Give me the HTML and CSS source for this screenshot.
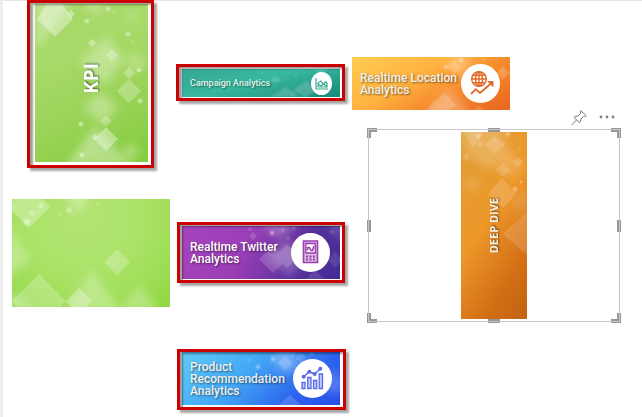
FILE: index.html
```html
<!DOCTYPE html>
<html lang="en">
<head>
<meta charset="utf-8">
<meta name="viewport" content="width=device-width">
<title>Analytics</title>
<link rel="stylesheet" href="styles.css">
</head>
<body>
<svg class="defs" aria-hidden="true">
  <defs>
    <filter id="soft" x="-40%" y="-40%" width="180%" height="180%"><feGaussianBlur stdDeviation="4"/></filter>
    <filter id="glow" x="-60%" y="-60%" width="220%" height="220%"><feGaussianBlur stdDeviation="0.9"/></filter>
  </defs>
</svg>
<main class="canvas">
  <section class="column column-overview">
    <a class="frame frame-kpi" href="#kpi">
      <span class="tile tile-kpi">
        <svg class="art" viewBox="0 0 113 158" preserveAspectRatio="xMidYMid slice" aria-hidden="true">
          <g fill="#fff" filter="url(#soft)">
            <path opacity=".3" d="M0-4H40L0 48Z"/>
            <path opacity=".3" d="M72 32L90 55 70 82 44 58Z"/>
            <path opacity=".32" d="M66 88L83 104 66 120 49 104Z"/>
            <path opacity=".35" d="M60 122L98 162H30Z"/>
            <path opacity=".25" d="M100 47L112 59 101 69 90 58Z"/>
            <path opacity=".3" d="M97 138L105 148 96 157 87 148Z"/>
            <path opacity=".25" d="M43-6H74L60 13Z"/>
            <path opacity=".25" d="M96 5L102 11 96 17 90 11Z"/>
          </g>
          <g fill="#fff">
            <path opacity=".35" d="M14-4H24L38 15 20 33 2 15Z"/>
            <path opacity=".35" d="M36 6L40 10 36 14 32 10ZM57 35L61 39 57 43 53 39Z"/>
            <path opacity=".28" d="M77 45L83 51 77 57 71 51ZM94 63L100 69 94 75 88 69Z"/>
            <path opacity=".25" d="M94 75L106 87 94 99 82 87ZM71 111L77 117 71 123 65 117Z"/>
            <path opacity=".36" d="M71 123L83 135 71 147 59 135Z"/>
            <path opacity=".4" d="M104 63L107 66 104 69 101 66ZM105 94L108 97 105 100 102 97ZM46 117L49 120 46 123 43 120ZM47 148L50 151 47 154 44 151ZM60 130L63 133 60 136 57 133Z"/>
          </g>
          <g fill="#fff" opacity=".65" filter="url(#glow)"><circle cx="73" cy="5" r="2"/><circle cx="52" cy="17" r="2"/><circle cx="93" cy="30" r="2"/><circle cx="79" cy="8" r="1"/><circle cx="98" cy="38" r="1"/></g>
        </svg>
        <span class="label label-vertical label-kpi">KPI</span>
      </span>
    </a>
    <div class="tile tile-green">
      <svg class="art" viewBox="0 0 158 108" preserveAspectRatio="xMidYMid slice" aria-hidden="true">
        <g fill="#fff" filter="url(#soft)">
          <path opacity=".28" d="M-6 22L18 60-6 82Z"/>
          <path opacity=".3" d="M51-8H82L66 14Z"/>
          <path opacity=".28" d="M80 72L110 112H52Z"/>
          <path opacity=".28" d="M127 86L147 112H108Z"/>
          <path opacity=".28" d="M0 92L20 110H-8Z"/>
        </g>
        <g fill="#fff">
          <path opacity=".26" d="M2 0H30L38 8 17 29 0 12V2Z"/>
          <path opacity=".24" d="M105 50L118 63 105 76 92 63Z"/>
          <path opacity=".22" d="M27 75L54 102 48 108H6L0 102Z"/>
          <path opacity=".28" d="M67 89L80 102 74 108H60L54 102Z"/>
        </g>
        <g fill="#fff" opacity=".5" filter="url(#glow)"><circle cx="15" cy="23" r="3"/><circle cx="57" cy="11" r="2.500"/><circle cx="29" cy="7" r="2"/><circle cx="20" cy="14" r="2"/><circle cx="27" cy="13" r="1"/><circle cx="48" cy="15" r="1"/><circle cx="62" cy="15" r="1"/><circle cx="86" cy="5" r="1"/><circle cx="2" cy="7" r="1"/></g>
      </svg>
    </div>
  </section>

  <section class="column column-reports">
    <a class="frame" href="#campaign">
      <span class="tile tile-banner tile-campaign">
        <svg class="art" viewBox="0 0 158 28" preserveAspectRatio="xMidYMid slice" aria-hidden="true">
          <g fill="#fff" filter="url(#glow)"><path opacity=".18" d="M104 18L118 28H88ZM124 12L136 21 123 29 111 21ZM93 8L98 11 93 14 88 11ZM132 0H146L139 5Z"/><g opacity=".3"><circle cx="80" cy="4" r="1"/><circle cx="97" cy="11" r="1"/><circle cx="114" cy="7" r="1"/><circle cx="111" cy="25" r="1"/></g></g>
        </svg>
        <span class="label label-small">Campaign Analytics</span>
        <svg class="badge badge-small" viewBox="0 0 21 23" aria-hidden="true">
          <ellipse cx="10.500" cy="11.500" rx="10.500" ry="11.500" fill="#fff"/>
          <g fill="none" stroke="#38a794" stroke-width="1.200"><path d="M5 6V17H17M7 15V11L10 9 12 12 15 10 16 12V15Z"/><path d="M7 12L10 14 13 12 16 15"/></g>
        </svg>
      </span>
    </a>
    <a class="frame frame-twitter" href="#twitter">
      <span class="tile tile-banner tile-twitter">
        <svg class="art" viewBox="0 0 158 53" preserveAspectRatio="xMidYMid slice" aria-hidden="true">
          <g fill="#fff" filter="url(#soft)"><path opacity=".22" d="M103 14L128 30 108 50 84 31Z"/><path opacity=".25" d="M76-5H118L98 13Z"/><path opacity=".2" d="M142-8H160V16Z"/></g>
          <g fill="#fff"><path opacity=".16" d="M91 20L106 33 91 47 77 33ZM105 18L118 30 105 42 94 30ZM71 6L75 10 71 14 67 10Z"/><path opacity=".1" d="M133 44L142 53H124ZM153 26L160 34 153 42 146 34Z"/></g>
          <g fill="#fff" opacity=".6" filter="url(#glow)"><circle cx="68" cy="3" r="1"/><circle cx="90" cy="7" r="2"/><circle cx="101" cy="4" r="1"/><circle cx="112" cy="2" r="1"/><circle cx="106" cy="12" r="1"/><circle cx="150" cy="6" r="1"/></g>
        </svg>
        <span class="label">Realtime Twitter<br>Analytics</span>
        <svg class="badge" viewBox="0 0 39 39" aria-hidden="true">
          <circle cx="19.500" cy="19.500" r="19.500" fill="#fff"/>
          <g fill="none" stroke="#9b3fb0"><path fill="#dcb8e4" stroke-width="1.600" d="M12.500 8H26.500V29.500H12.500Z"/><path fill="#fff" stroke-width="1.300" d="M14.800 10.500H24.300V20H14.800Z"/><path stroke-width="1.600" d="M16.500 17.500V14.500H18.500L20 17.500H21.500L23 13"/><path stroke-width="1.800" stroke-dasharray="2 1.500" d="M15 23.500H24M15 26.500H24"/></g>
        </svg>
      </span>
    </a>
    <a class="frame frame-product" href="#product">
      <span class="tile tile-banner tile-product">
        <svg class="art" viewBox="0 0 158 53" preserveAspectRatio="xMidYMid slice" aria-hidden="true">
          <g fill="#fff" filter="url(#soft)"><path opacity=".3" d="M105-4L120 14 103 22 89 7Z"/><path opacity=".2" d="M151 17L165 32 151 45 139 31Z"/></g>
          <g fill="#fff"><path opacity=".15" d="M103 4L110 11 103 18 96 11ZM108 43L119 53H97ZM119 1L125 6 119 11 113 6Z"/></g>
          <g fill="#fff" opacity=".5" filter="url(#glow)"><circle cx="76" cy="15" r="2"/><circle cx="91" cy="7" r="2"/><circle cx="67" cy="8" r="1"/><circle cx="111" cy="3" r="1"/><circle cx="130" cy="2" r="1"/></g>
        </svg>
        <span class="label label-muted">Product<br>Recommendation<br>Analytics</span>
        <svg class="badge" viewBox="0 0 39 39" aria-hidden="true">
          <circle cx="19.500" cy="19.500" r="19.500" fill="#fff"/>
          <g fill="#bfc6fb" stroke="#5a6be8" stroke-width="1.300"><path d="M9 23.500H12V29.500H9ZM14.700 18.500H18V29.500H14.700ZM20.500 21.500H23.700V29.500H20.500ZM26.200 15H29.500V29.500H26.200Z"/><path fill="none" stroke-width="1.500" d="M10.700 17.700L16.300 12.700 21.700 15 27.300 9.700"/></g>
          <g fill="#5a6be8"><circle cx="10.700" cy="17.700" r="2"/><circle cx="16.300" cy="12.700" r="2"/><circle cx="21.700" cy="15" r="2"/><circle cx="27.300" cy="9.700" r="2"/></g>
        </svg>
      </span>
    </a>
  </section>

  <section class="column column-detail">
    <a class="tile tile-banner tile-location" href="#location">
      <svg class="art" viewBox="0 0 158 53" preserveAspectRatio="xMidYMid slice" aria-hidden="true">
        <g fill="#fff" filter="url(#soft)"><path opacity=".25" d="M108-4L122 8 108 20 94 7Z"/><path opacity=".25" d="M96 30L120 58H73Z"/></g>
        <g fill="#fff"><path opacity=".16" d="M102 3L109 10 102 17 95 10ZM84 42L95 53H74ZM92 36L104 48 98 53H86L80 48Z"/><path opacity=".16" d="M127 49L132 53H122ZM151 9L158 16 151 23 145 16Z"/></g>
        <g fill="#fff" opacity=".5" filter="url(#glow)"><circle cx="94" cy="10" r="2"/><circle cx="109" cy="3" r="2"/><circle cx="132" cy="2" r="1"/><circle cx="150" cy="14" r="1"/></g>
      </svg>
      <span class="label label-muted">Realtime Location<br>Analytics</span>
      <svg class="badge" viewBox="0 0 39 39" aria-hidden="true">
        <circle cx="19.500" cy="19.500" r="19.500" fill="#fff"/>
        <g fill="none" stroke="#e2692a" stroke-width="1.400"><circle cx="18" cy="15" r="7.300"/><ellipse cx="18" cy="15" rx="3.500" ry="7.300"/><path d="M18 7.700V22.300M10.700 15H25.300M12 11.200H24M12 18.800H24"/></g>
        <path d="M10 30L14.700 25.200 19 29 30.500 19" fill="none" stroke="#fff" stroke-width="4"/>
        <path d="M10 30L14.700 25.200 19 29 30.500 19" fill="none" stroke="#e2692a" stroke-width="1.800"/>
        <path d="M27 17.500H32V22.500Z" fill="#e2692a" stroke="#e2692a"/>
      </svg>
    </a>
    <div class="toolbar">
      <button class="tool" type="button" aria-label="Pin visual">
        <svg viewBox="0 0 16 16" aria-hidden="true"><path fill="none" stroke="#777" d="M10 .7L15.200 5.700 13.700 6.500 12.600 6.300 9.800 9.200Q10 11.400 8.300 12.700L3 7.300Q4.700 5.800 7 6L9.700 3.200 9.400 1.800ZM5.500 10L.5 15.200"/></svg>
      </button>
      <button class="tool" type="button" aria-label="More options">
        <svg viewBox="0 0 16 16" aria-hidden="true"><g fill="#808080"><circle cx="2" cy="7" r="1.400"/><circle cx="8" cy="7" r="1.400"/><circle cx="14" cy="7" r="1.400"/></g></svg>
      </button>
    </div>
    <div class="selection">
      <i class="handle corner top-left"></i><i class="handle bar top"></i><i class="handle corner top-right"></i>
      <i class="handle side left"></i><i class="handle side right"></i>
      <i class="handle corner bottom-left"></i><i class="handle bar bottom"></i><i class="handle corner bottom-right"></i>
      <a class="tile tile-deep" href="#deep-dive">
        <svg class="art" viewBox="0 0 66 187" preserveAspectRatio="xMidYMid slice" aria-hidden="true">
          <g fill="#fff" filter="url(#soft)"><path opacity=".2" d="M0-5H40L50 24 27 38 4 20Z"/><path opacity=".16" d="M49 20L65 34 49 47 37 34Z"/><path opacity=".17" d="M11 44L18 52 11 60 4 52Z"/><path opacity=".12" d="M63 56L72 72 61 83 49 70Z"/></g>
          <g fill="#fff"><path opacity=".15" d="M2 0H24L12 15ZM33 3L43 13 33 22 24 13ZM19 8L23 12 19 16 15 12ZM5 21L9 25 5 29 1 25Z"/><path opacity=".16" d="M42 31L49 38 42 45 34 38ZM57 25L62 30 57 35 52 30ZM41 46L55 62 42 76 27 62Z"/><path opacity=".14" d="M66 80L42 102 66 123Z"/><path opacity=".28" d="M54 54L57 57 54 60 51 57ZM60 48L62 50 60 52 58 50Z"/></g>
          <g fill="#fff" opacity=".5" filter="url(#glow)"><circle cx="17" cy="4" r="2"/><circle cx="47" cy="2" r="2"/><circle cx="34" cy="9" r="1"/><circle cx="42" cy="12" r="1"/><circle cx="58" cy="17" r="1"/></g>
        </svg>
        <span class="label label-vertical label-deep">DEEP DIVE</span>
      </a>
    </div>
  </section>
</main>
</body>
</html>
```
FILE: styles.css
```css
* {
  box-sizing: border-box;
}

body {
  margin: 0;
  background: #fff;
  font-family: Roboto, "Liberation Sans", sans-serif;
}

.defs {
  display: block;
  width: 0;
  height: 0;
}

.canvas {
  display: flex;
  gap: 6px;
  min-height: 100vh;
  padding: 0 22px 0 9px;
  border-left: 3px solid #ededeb;
  background: linear-gradient(#e4e4e4, #e4e4e4) top / 100% 1px no-repeat;
}

.column {
  display: flex;
  flex-direction: column;
  align-items: flex-start;
}

.column-overview {
  flex: 0 0 158px;
  gap: 31px;
}

.column-reports {
  flex: 0 0 170px;
  padding-top: 64px;
}

.column-detail {
  flex: 1;
  padding-top: 57px;
}

a {
  color: inherit;
  text-decoration: none;
}

.frame {
  position: relative;
  display: block;
  padding: 2px 2px 1px 3px;
  border: 3px solid #cb0000;
  background: #fff;
  box-shadow: 3px 3px 2px rgba(0, 0, 0, 0.35);
}

.frame::after {
  content: "";
  position: absolute;
  inset: 0;
  box-shadow: inset 3px 2px 2px rgba(0, 0, 0, 0.38);
}

.frame-kpi {
  margin-left: 15px;
  padding: 1px 3px 3px 5px;
}

.frame-twitter {
  margin: 121px 0 66px 1px;
  padding: 1px 2px 1px 2px;
}

.frame-product {
  margin-left: 1px;
  padding: 0 3px 2px 2px;
}

.tile {
  display: grid;
  overflow: hidden;
}

.tile > * {
  grid-area: 1 / 1;
}

.art {
  display: block;
  width: 100%;
  height: 100%;
}

.tile-kpi {
  width: 113px;
  height: 158px;
  background: linear-gradient(155deg, #a5d765 0%, #a8da69 30%, #9cd45a 60%, #84cb3c 100%);
}

.tile-green {
  width: 158px;
  height: 108px;
  background: radial-gradient(circle at 45% 15%, #b3e474 0%, #abe369 45%, #9edd55 75%, #8fd740 100%);
}

.tile-banner {
  width: 158px;
  height: 53px;
  align-items: center;
}

.tile-campaign {
  height: 28px;
  background: linear-gradient(165deg, #35a892 0%, #38b99f 45%, #188779 100%);
}

.tile-twitter {
  background: linear-gradient(115deg, #a844bd 0%, #9a3eb6 40%, #56309b 75%, #442b94 100%);
}

.tile-product {
  background: linear-gradient(135deg, #61caf7 0%, #42a8f5 40%, #2c62ed 75%, #264be8 100%);
}

.tile-location {
  background: linear-gradient(150deg, #ffcd51 0%, #ffb13f 40%, #f58a2c 65%, #e8651d 100%);
}

.tile-deep {
  width: 66px;
  height: 187px;
  background: linear-gradient(125deg, #e0a037 0%, #ed9729 45%, #d26e15 78%, #c26111 100%);
}

.label {
  z-index: 1;
  padding-left: 8px;
  color: #fff;
  font-size: 12px;
  font-weight: 500;
  line-height: 12px;
  text-shadow: 1px 1px 2px rgba(0, 0, 0, 0.5);
}

.label-muted {
  color: #f0f0ec;
}

.label-small {
  color: #e2f4ef;
  font-size: 9px;
}

.label-vertical {
  place-self: center;
  padding: 0;
  font-family: "Open Sans", "Noto Sans", sans-serif;
  font-weight: 700;
  writing-mode: vertical-rl;
  transform: rotate(180deg);
}

.label-kpi {
  margin: 0 2px 9px 0;
  font-size: 19px;
  line-height: 20px;
}

.label-deep {
  color: #f8f0e4;
  font-size: 11px;
}

.badge {
  z-index: 1;
  justify-self: end;
  width: 39px;
  height: 39px;
  margin-right: 10px;
}

.badge-small {
  width: 21px;
  height: 23px;
  margin-right: 8px;
}

.frame-product .badge {
  margin-right: 8px;
}

.toolbar {
  display: flex;
  align-self: flex-end;
  gap: 12px;
  margin-bottom: 3px;
  padding-right: 5px;
}

.tool {
  width: 16px;
  height: 16px;
  padding: 0;
  border: 0;
  background: none;
}

.tool svg {
  display: block;
}

.selection {
  position: relative;
  display: flex;
  justify-content: center;
  align-self: stretch;
  margin-left: 16px;
  padding: 2px;
  border: 1px solid #c6c6c6;
}

.handle {
  position: absolute;
  z-index: -1;
  background: #979797;
}

.corner {
  width: 10px;
  height: 10px;
  background: none;
  border: 0 solid #979797;
}

.bar {
  left: calc(50% - 6px);
  width: 12px;
  height: 4px;
}

.side {
  top: calc(50% - 6px);
  width: 4px;
  height: 12px;
}

.top, .top-left, .top-right {
  top: -2px;
}

.bottom, .bottom-left, .bottom-right {
  bottom: -2px;
}

.left, .top-left, .bottom-left {
  left: -2px;
}

.right, .top-right, .bottom-right {
  right: -2px;
}

.top-left {
  border-width: 4px 0 0 4px;
}

.top-right {
  border-width: 4px 4px 0 0;
}

.bottom-left {
  border-width: 0 0 4px 4px;
}

.bottom-right {
  border-width: 0 4px 4px 0;
}
```
